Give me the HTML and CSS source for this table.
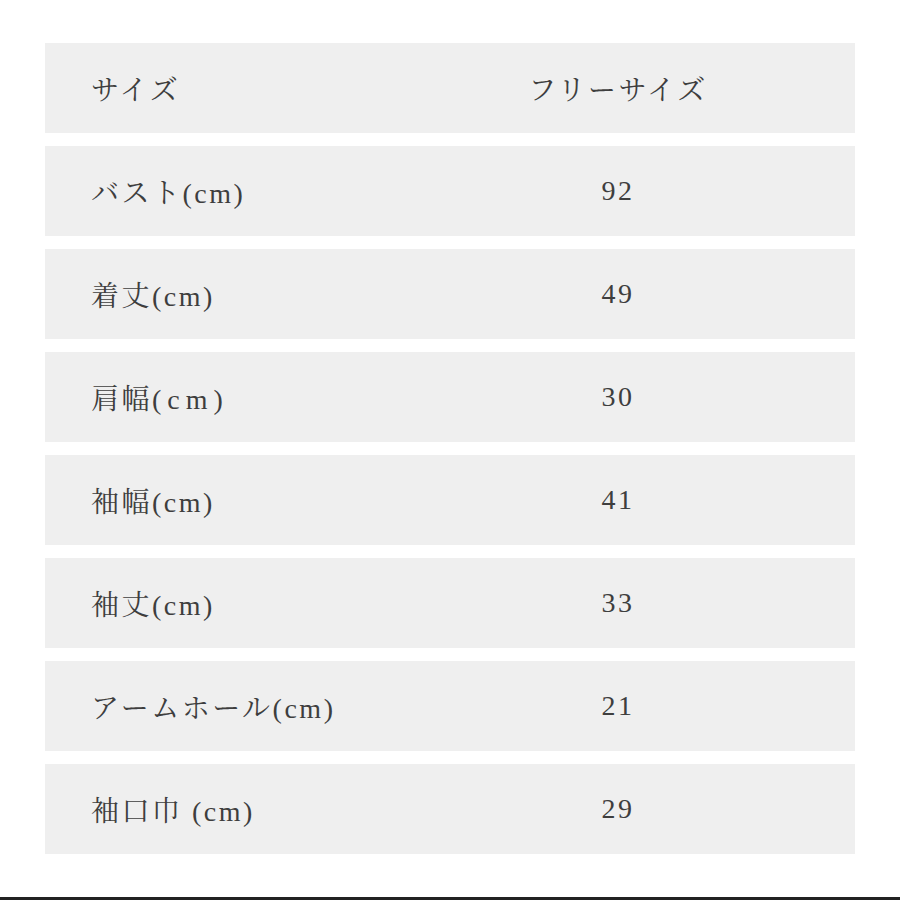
FILE: index.html
```html
<!DOCTYPE html>
<html lang="ja">
<head>
<meta charset="utf-8">
<title>サイズ表</title>
<link rel="stylesheet" href="styles.css">
</head>
<body>
<div class="page">
  <div class="table">
    <div class="row"><div class="label">サイズ</div><div class="value">フリーサイズ</div></div>
    <div class="row"><div class="label">バスト(cm)</div><div class="value">92</div></div>
    <div class="row"><div class="label">着丈(cm)</div><div class="value">49</div></div>
    <div class="row"><div class="label">肩幅<span class="spread">(cm</span>)</div><div class="value">30</div></div>
    <div class="row"><div class="label">袖幅(cm)</div><div class="value">41</div></div>
    <div class="row"><div class="label">袖丈(cm)</div><div class="value">33</div></div>
    <div class="row"><div class="label">アームホール(cm)</div><div class="value">21</div></div>
    <div class="row"><div class="label">袖口巾 (cm)</div><div class="value">29</div></div>
  </div>
  <div class="bottom-line"></div>
</div>
</body>
</html>
```

FILE: styles.css
```css
html, body {
  margin: 0;
  padding: 0;
  background: #ffffff;
}
.page {
  width: 900px;
  height: 900px;
  display: flex;
  flex-direction: column;
  overflow: hidden;
}
.table {
  margin: 43px 45px 0 45px;
  display: flex;
  flex-direction: column;
  gap: 13px;
}
.row {
  height: 90px;
  background: #efefef;
  display: grid;
  grid-template-columns: 452px 240px;
  align-items: center;
  font-family: "Liberation Serif", "Noto Serif CJK JP", "Noto Sans CJK JP", serif;
  font-size: 28px;
  letter-spacing: 2.5px;
  color: #3e3e3e;
  font-weight: 400;
}
.label {
  padding-left: 46px;
  white-space: nowrap;
}
.value {
  text-align: center;
  white-space: nowrap;
  padding-left: 2px;
}
.spread {
  letter-spacing: 6px;
}
.bottom-line {
  margin-top: auto;
  height: 3px;
  background: #222222;
}
```
